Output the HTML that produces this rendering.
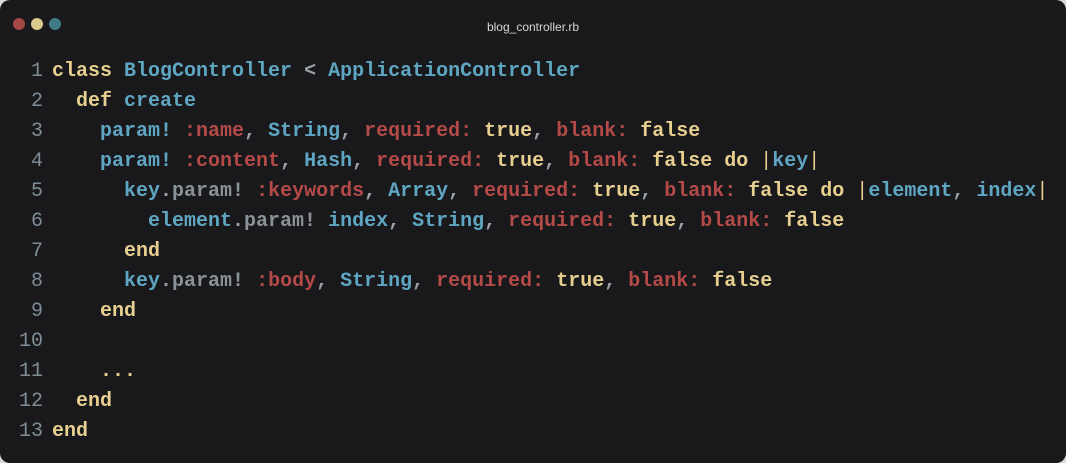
<!DOCTYPE html>
<html><head><meta charset="utf-8"><style>
html,body{margin:0;padding:0;background:#d8d8d8;}
.w{position:absolute;left:0;top:0;width:1066px;height:463px;background:#19191c;border-radius:10px;overflow:hidden;}
.d{position:absolute;top:18px;width:12px;height:12px;border-radius:50%;}
.t{position:absolute;top:20px;left:0;width:1066px;text-align:center;color:#d8d8d8;font:12px "Liberation Sans",sans-serif;}
pre{position:absolute;left:0;top:57px;margin:0;font:bold 20px/30px "Liberation Mono",monospace;color:#9aa3aa;}
.n{display:inline-block;width:43px;margin-right:9px;text-align:right;color:#7f8d96;font-weight:normal;}
.k{color:#e6cf8f}.c{color:#5fa6c2}.r{color:#b44a48}.g{color:#8a9298}.p{color:#e6cf8f;font-weight:normal}
</style></head><body><div class="w">
<div class="d" style="left:13px;background:#a64848"></div>
<div class="d" style="left:31px;background:#d9c98a"></div>
<div class="d" style="left:49px;background:#3e7a84"></div>
<div class="t">blog_controller.rb</div>
<pre><span class="n">1</span><span class="k">class</span> <span class="c">BlogController</span> &lt; <span class="c">ApplicationController</span>
<span class="n">2</span>  <span class="k">def</span> <span class="c">create</span>
<span class="n">3</span>    <span class="c">param!</span> <span class="r">:name</span>, <span class="c">String</span>, <span class="r">required:</span> <span class="k">true</span>, <span class="r">blank:</span> <span class="k">false</span>
<span class="n">4</span>    <span class="c">param!</span> <span class="r">:content</span>, <span class="c">Hash</span>, <span class="r">required:</span> <span class="k">true</span>, <span class="r">blank:</span> <span class="k">false do</span> <span class="p">|</span><span class="c">key</span><span class="p">|</span>
<span class="n">5</span>      <span class="c">key</span>.<span class="g">param!</span> <span class="r">:keywords</span>, <span class="c">Array</span>, <span class="r">required:</span> <span class="k">true</span>, <span class="r">blank:</span> <span class="k">false do</span> <span class="p">|</span><span class="c">element</span>, <span class="c">index</span><span class="p">|</span>
<span class="n">6</span>        <span class="c">element</span>.<span class="g">param!</span> <span class="c">index</span>, <span class="c">String</span>, <span class="r">required:</span> <span class="k">true</span>, <span class="r">blank:</span> <span class="k">false</span>
<span class="n">7</span>      <span class="k">end</span>
<span class="n">8</span>      <span class="c">key</span>.<span class="g">param!</span> <span class="r">:body</span>, <span class="c">String</span>, <span class="r">required:</span> <span class="k">true</span>, <span class="r">blank:</span> <span class="k">false</span>
<span class="n">9</span>    <span class="k">end</span>
<span class="n">10</span>
<span class="n">11</span>    <span class="k">...</span>
<span class="n">12</span>  <span class="k">end</span>
<span class="n">13</span><span class="k">end</span></pre>
</div></body></html>
